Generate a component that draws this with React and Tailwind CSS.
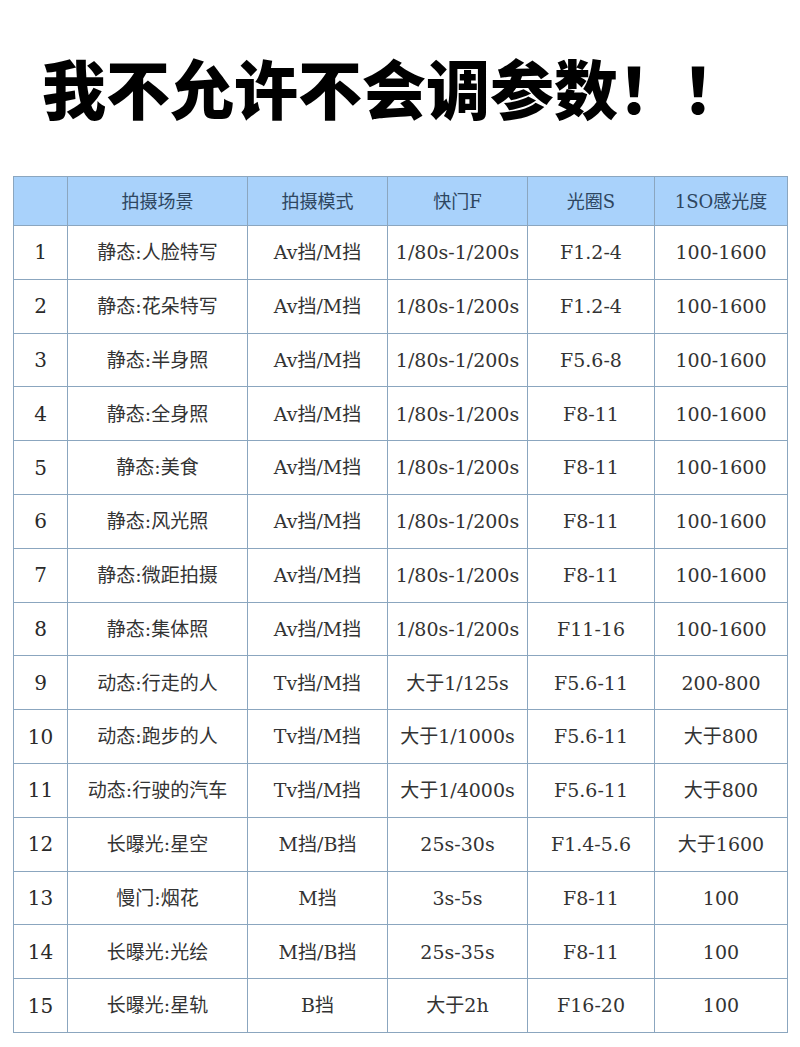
import React from "react";

const headers = ["", "拍摄场景", "拍摄模式", "快门F", "光圈S", "1SO感光度"];

const rows = [
  ["1", "静态:人脸特写", "Av挡/M挡", "1/80s-1/200s", "F1.2-4", "100-1600"],
  ["2", "静态:花朵特写", "Av挡/M挡", "1/80s-1/200s", "F1.2-4", "100-1600"],
  ["3", "静态:半身照", "Av挡/M挡", "1/80s-1/200s", "F5.6-8", "100-1600"],
  ["4", "静态:全身照", "Av挡/M挡", "1/80s-1/200s", "F8-11", "100-1600"],
  ["5", "静态:美食", "Av挡/M挡", "1/80s-1/200s", "F8-11", "100-1600"],
  ["6", "静态:风光照", "Av挡/M挡", "1/80s-1/200s", "F8-11", "100-1600"],
  ["7", "静态:微距拍摄", "Av挡/M挡", "1/80s-1/200s", "F8-11", "100-1600"],
  ["8", "静态:集体照", "Av挡/M挡", "1/80s-1/200s", "F11-16", "100-1600"],
  ["9", "动态:行走的人", "Tv挡/M挡", "大于1/125s", "F5.6-11", "200-800"],
  ["10", "动态:跑步的人", "Tv挡/M挡", "大于1/1000s", "F5.6-11", "大于800"],
  ["11", "动态:行驶的汽车", "Tv挡/M挡", "大于1/4000s", "F5.6-11", "大于800"],
  ["12", "长曝光:星空", "M挡/B挡", "25s-30s", "F1.4-5.6", "大于1600"],
  ["13", "慢门:烟花", "M挡", "3s-5s", "F8-11", "100"],
  ["14", "长曝光:光绘", "M挡/B挡", "25s-35s", "F8-11", "100"],
  ["15", "长曝光:星轨", "B挡", "大于2h", "F16-20", "100"],
];

const widths = ["w-[54px]", "w-[180px]", "w-[140px]", "w-[140px]", "w-[127px]", "w-[133px]"];

export default function App() {
  return (
    <div className="w-[800px] h-[1047px] bg-white overflow-hidden font-['DejaVu_Serif','Noto_Sans_CJK_SC',serif]">
      {/* title */}
      <div className="h-[176px] flex items-center pl-[42px] pb-[4px]">
        <h1 className="text-[64px] leading-none font-black text-black font-['Noto_Sans_CJK_SC',sans-serif]">
          我不允许不会调参数！！
        </h1>
      </div>

      {/* table */}
      <table className="ml-[13px] table-fixed border-collapse border border-[#8ba6bf] text-[19px] text-[#333]">
        <colgroup>
          {widths.map((w, i) => (
            <col key={i} className={w} />
          ))}
        </colgroup>
        <thead>
          <tr className="h-[49px] bg-[#a9d2fb]">
            {headers.map((h, i) => (
              <th
                key={i}
                className="border border-[#8ba6bf] font-normal text-[18px] text-[#2e4660] text-center"
              >
                {h}
              </th>
            ))}
          </tr>
        </thead>
        <tbody>
          {rows.map((r) => (
            <tr key={r[0]} className="h-[53.8px]">
              {r.map((c, i) => (
                <td
                  key={i}
                  className={`border border-[#8ba6bf] text-center whitespace-nowrap ${
                    i === 0 ? "text-[20px] text-[#2a2a2a]" : ""
                  }`}
                >
                  {c}
                </td>
              ))}
            </tr>
          ))}
        </tbody>
      </table>
    </div>
  );
}
